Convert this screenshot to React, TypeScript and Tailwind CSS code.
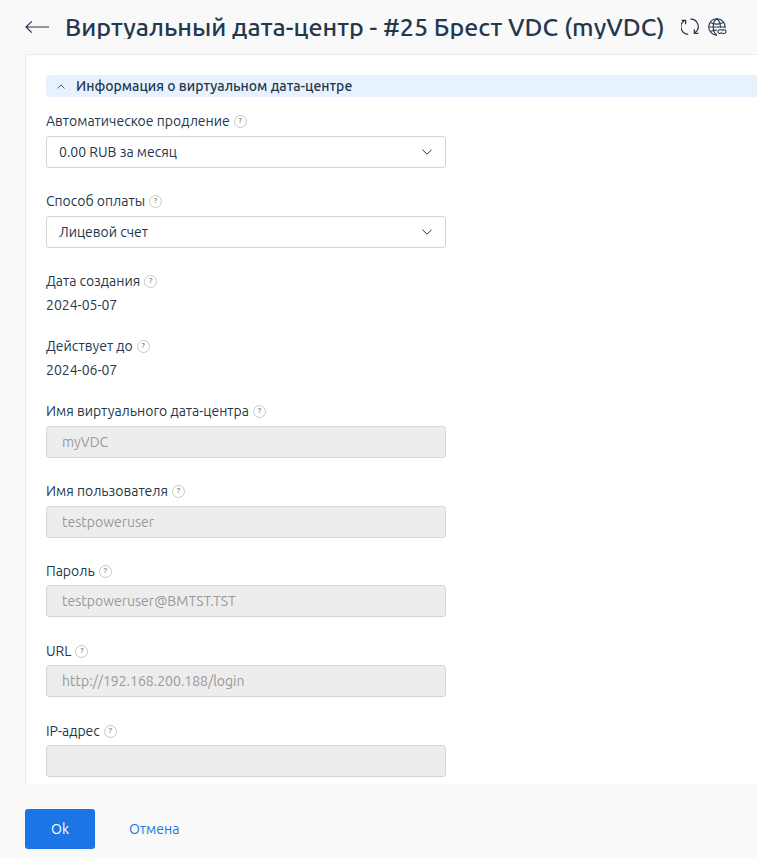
import { clsx } from "clsx";

type Field = {
  label: string;
  kind: "select" | "text" | "input";
  value: string;
  labelTracking?: string;
  valueTracking?: string;
  spacing: string;
  labelGap?: string;
};

const FIELDS: Field[] = [
  { label: "Автоматическое продление", kind: "select", value: "0.00 RUB за месяц", spacing: "mb-[23px]" },
  { label: "Способ оплаты", kind: "select", value: "Лицевой счет", spacing: "mb-[23px]" },
  { label: "Дата создания", kind: "text", value: "2024-05-07", spacing: "mb-[21px]" },
  { label: "Действует до", kind: "text", value: "2024-06-07", spacing: "mb-[21px]" },
  { label: "Имя виртуального дата-центра", kind: "input", value: "myVDC", spacing: "mb-[23px]" },
  { label: "Имя пользователя", kind: "input", value: "testpoweruser", spacing: "mb-[23px]" },
  { label: "Пароль", kind: "input", value: "testpoweruser@BMTST.TST", spacing: "mb-6", labelGap: "mb-1" },
  { label: "URL", kind: "input", value: "http://192.168.200.188/login", spacing: "mb-6", labelGap: "mb-1" },
  { label: "IP-адрес", kind: "input", value: "", spacing: "mb-6", labelGap: "mb-1" },
];

function HelpIcon() {
  return (
    <span className="flex h-[13px] w-[13px] shrink-0 items-center justify-center rounded-full border border-[#c8c8c8] text-[8px] leading-none font-bold text-[#999]">
      ?
    </span>
  );
}

function RefreshIcon() {
  return (
    <svg width="18" height="18" viewBox="0 0 18 18" fill="none" stroke="#23374d" strokeWidth="1.2">
      <path d="M7.2 16.3A7.4 7.4 0 0 1 3.2 2.8M.6 2.3h4v4" />
      <path d="M9.4 1.2a7.4 7.4 0 0 1 4.7 13.4M17.5 15.4h-4.2v-4.2" />
    </svg>
  );
}

function GlobeLinkIcon() {
  return (
    <svg width="19" height="18" viewBox="0 0 19 18" fill="none" stroke="#23374d" strokeWidth="1.1">
      <path d="M17 10.2A8.2 8.2 0 1 0 9 17.1" />
      <path d="M8.8 17C6.6 15.400 5.200 12.500 5.200 8.900S6.600 2.200 8.800.8c2.200 1.400 3.600 4.300 3.700 9" />
      <path d="M2.200 4.500c4 2 9.200 2 13.200 0M.6 9h16.400M2.200 13.600c2-1 4.200-1.500 6.600-1.500" />
      <path d="M12.800 15.500h-1a1.900 1.900 0 0 1 0-3.800h1.400c.9 0 1.600.5 1.800 1.300M14.800 11.700h1.300a1.900 1.900 0 0 1 0 3.800h-1.400c-.9 0-1.600-.5-1.800-1.300" />
    </svg>
  );
}

function FieldControl({ field }: { field: Field }) {
  if (field.kind === "text") {
    return <div className={clsx("leading-5", field.valueTracking)}>{field.value}</div>;
  }
  if (field.kind === "select") {
    return (
      <button className="flex h-8 w-[400px] items-center justify-between rounded-[3px] border border-[#d6d6d6] bg-white pr-[13px] pl-3">
        <span className={clsx("whitespace-nowrap", field.valueTracking)}>{field.value}</span>
        <svg width="10" height="6" viewBox="0 0 10 6" fill="none" stroke="#23374d">
          <path d="M.4.6 5 5.200 9.600.6" />
        </svg>
      </button>
    );
  }
  return (
    <div className="flex h-8 w-[400px] items-center rounded-[3px] border border-[#d6d6d6] bg-[#ededed] px-[15px] text-[#999]">
      <span className={clsx("whitespace-nowrap", field.valueTracking)}>{field.value}</span>
    </div>
  );
}

export default function App() {
  return (
    <div className="flex h-[858px] w-[757px] flex-col overflow-hidden bg-[#f9f9f9] font-['Ubuntu','Noto_Sans',sans-serif] text-[14px] leading-5 text-[#23374d]">
      <header className="flex h-[54px] shrink-0 items-center pl-[25px]">
        <svg width="24" height="12" viewBox="0 0 24 12" fill="none" stroke="#23374d" strokeWidth="1.2">
          <path d="M24 6H1M6.800.4 1 6l5.800 5.600" />
        </svg>
        <h1 className="ml-4 h-[24px] overflow-hidden text-[25px] leading-[24px] font-medium whitespace-nowrap">
          Виртуальный дата-центр - #25 Брест VDC (myVDC)
        </h1>
        <div className="ml-4 flex items-center gap-[9px]">
          <RefreshIcon />
          <GlobeLinkIcon />
        </div>
      </header>

      <main className="ml-[25px] h-[730px] shrink-0 overflow-hidden rounded-tl-[4px] border-t border-l border-[#ebebeb] bg-white pt-5 pl-5">
        <div className="mb-[14px] flex h-[22px] items-center rounded-l-[3px] bg-[#e8f2ff] pl-[11px]">
          <svg width="8" height="5" viewBox="0 0 8 5" fill="none" stroke="#23374d" strokeWidth=".8">
            <path d="M.5 4.400 4 1l3.500 3.400" />
          </svg>
          <h2 className="ml-[11px] font-medium whitespace-nowrap">Информация о виртуальном дата-центре</h2>
        </div>

        {FIELDS.map((f) => (
          <div key={f.label} className={f.spacing}>
            <div className={clsx("flex items-center gap-1", f.kind === "text" ? "mb-1" : (f.labelGap ?? "mb-[5px]"))}>
              <span className={clsx("whitespace-nowrap", f.labelTracking)}>{f.label}</span>
              <HelpIcon />
            </div>
            <FieldControl field={f} />
          </div>
        ))}
      </main>

      <footer className="flex pt-[25px] pl-[25px]">
        <button className="h-10 w-[70px] rounded-[3px] bg-[#1b75e4] text-white">Ok</button>
        <button className="ml-[34px] text-[#1b75e4]">Отмена</button>
      </footer>
    </div>
  );
}
